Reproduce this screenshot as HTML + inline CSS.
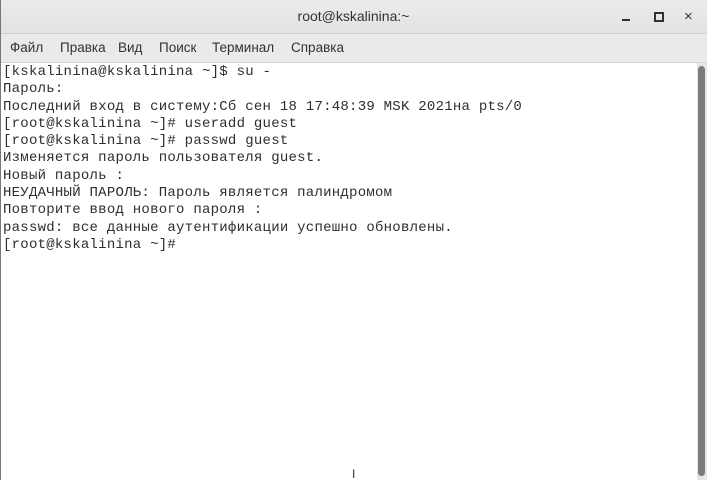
<!DOCTYPE html>
<html><head><meta charset="utf-8"><style>
body{margin:0;width:707px;height:480px;overflow:hidden;background:#fff;position:relative;font-family:"Liberation Sans","DejaVu Sans",sans-serif}
#title{position:absolute;left:0;top:0;width:707px;height:33px;background:linear-gradient(#ececec,#e2e2e2);border-bottom:1px solid #cfcfcf;text-align:center;line-height:33px;font-size:14px;color:#2e3436}
#menu{position:absolute;left:0;top:34px;width:707px;height:28px;background:#eaeaea;border-bottom:1px solid #d5d5d5;font-size:13.5px;color:#2e3436;line-height:28px}
#menu span{position:absolute;top:0}
#term{position:absolute;left:3px;top:64px;font-family:"Liberation Mono","DejaVu Sans Mono",monospace;font-size:14px;line-height:17.3px;white-space:pre;color:#2e2e2e;letter-spacing:0.25px}
#sb{position:absolute;left:697px;top:63px;width:10px;height:417px;background:#e6e6e6}
#sb div{position:absolute;left:1px;top:3px;width:7px;height:410px;background:#7b7b7b;border-radius:4px}
.lb{position:absolute;left:0;top:0;width:1px;height:480px;background:#777}
</style></head><body>
<div id="title">root@kskalinina:~
<div style="position:absolute;left:622px;top:19px;width:8px;height:2px;background:#2e3436"></div>
<div style="position:absolute;left:654px;top:12px;width:6px;height:6px;border:2px solid #2e3436"></div>
<div style="position:absolute;left:684px;top:0;font-size:15px;line-height:33px;color:#2e3436">×</div>
</div>
<div id="menu"><span style="left:10px">Файл</span><span style="left:60px">Правка</span><span style="left:118px">Вид</span><span style="left:159px">Поиск</span><span style="left:212px">Терминал</span><span style="left:291px">Справка</span></div>
<div id="term">[kskalinina@kskalinina ~]$ su -
Пароль:
Последний вход в систему:Сб сен 18 17:48:39 MSK 2021на pts/0
[root@kskalinina ~]# useradd guest
[root@kskalinina ~]# passwd guest
Изменяется пароль пользователя guest.
Новый пароль :
НЕУДАЧНЫЙ ПАРОЛЬ: Пароль является палиндромом
Повторите ввод нового пароля :
passwd: все данные аутентификации успешно обновлены.
[root@kskalinina ~]#</div>
<div id="sb"><div></div></div>
<div class="lb"></div>
<div style="position:absolute;left:352px;top:467px;font-size:12px;color:#333">I</div>
</body></html>
